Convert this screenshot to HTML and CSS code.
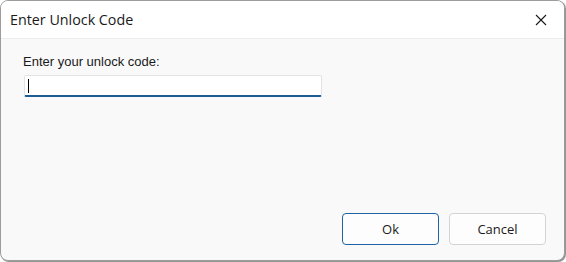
FILE: index.html
```html
<!DOCTYPE html>
<html lang="en">
<head>
  <meta charset="UTF-8" />
  <title>Enter Unlock Code</title>
  <link rel="stylesheet" href="styles.css">
</head>
<body>
  <div class="window">
    <div class="titlebar">
      <span class="title">Enter Unlock Code</span>
      <span class="close">
        <svg width="12" height="12" viewBox="0 0 12 12">
          <path d="M1 1 L11 11 M11 1 L1 11" stroke="#1a1a1a" stroke-width="1.1" fill="none"/>
        </svg>
      </span>
    </div>
    <div class="content">
      <label class="prompt" for="code">Enter your unlock code:</label>
      <div class="field"><span class="caret"></span></div>
      <div class="buttons">
        <button class="btn primary">Ok</button>
        <button class="btn">Cancel</button>
      </div>
    </div>
  </div>
</body>
</html>
```

FILE: styles.css
```css
body {
  margin: 0;
  background: #ffffff;
  width: 566px;
  height: 262px;
  overflow: hidden;
}

.window {
  box-sizing: border-box;
  width: 565px;
  height: 261px;
  border: 1px solid #9c9c9c;
  border-radius: 8px;
  background: #f9f9f9;
  box-shadow: 1px 1px 1px #8a8a8a;
  display: flex;
  flex-direction: column;
  overflow: hidden;
}

.titlebar {
  height: 37px;
  background: #ffffff;
  border-bottom: 1px solid #ececec;
  display: flex;
  align-items: center;
  justify-content: space-between;
  padding: 0 17px 0 9px;
  flex-shrink: 0;
}

.title {
  font-family: "Open Sans", sans-serif;
  font-size: 14.3px;
  color: #1a1a1a;
}

.close {
  display: flex;
}

.content {
  flex: 1;
  display: flex;
  flex-direction: column;
  padding: 15px 18px 15px 22px;
}

.prompt {
  font-family: "Liberation Sans", sans-serif;
  font-size: 13px;
  color: #1a1a1a;
  margin-bottom: 6px;
}

.field {
  box-sizing: border-box;
  width: 298px;
  height: 22px;
  margin-left: 1px;
  background: #ffffff;
  border: 1px solid #e3e3e3;
  border-bottom: 2px solid #1d5a96;
  border-radius: 2px;
  padding: 3px 0 0 3px;
}

.caret {
  display: block;
  width: 1px;
  height: 14px;
  background: #000000;
}

.buttons {
  margin-top: auto;
  display: flex;
  justify-content: flex-end;
  gap: 10px;
}

.btn {
  width: 97px;
  height: 32px;
  background: #fdfdfd;
  border: 1px solid #d3d3d3;
  border-radius: 4px;
  font-family: "Open Sans", sans-serif;
  font-size: 13px;
  color: #1a1a1a;
  padding: 0;
}

.btn.primary {
  border: 1px solid #1d63a6;
}
```
